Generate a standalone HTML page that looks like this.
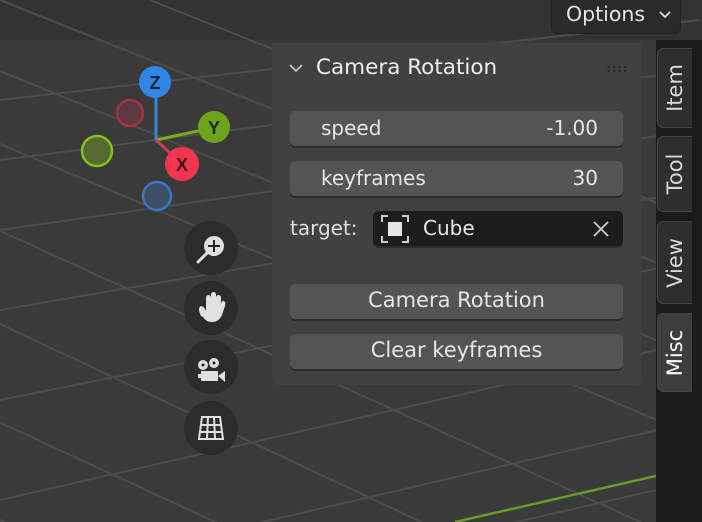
<html><head><style>
html,body{margin:0;width:702px;height:522px;overflow:hidden}
body{background:#3a3a3a;font-family:"Liberation Sans","DejaVu Sans",sans-serif;position:relative}
.a{position:absolute}
.f{position:absolute;background:#545454;border-radius:5px;color:#e6e6e6;font-size:20px;box-shadow:0 2px 0 #2c2c2c;font-family:"DejaVu Sans",sans-serif}
.tab{position:absolute;left:657px;width:34px;background:#2e2e2e;border:1px solid #444;border-right:none;border-radius:6px 0 0 6px;color:#d8d8d8;font-family:"DejaVu Sans",sans-serif;font-size:21px}
.tab span{position:absolute;left:50%;top:50%;transform:translate(-50%,-50%) rotate(-90deg);white-space:nowrap}
.btn{position:absolute;left:184px;width:54px;height:54px;border-radius:50%;background:#2b2b2b;opacity:.95}
</style></head><body>
<svg class="a" style="left:0;top:0" width="702" height="522">
<rect x="0" y="0" width="702" height="40" fill="#333"/>
<g stroke="#4c4c4c" stroke-width="2">
<line x1="-200" y1="60" x2="900" y2="522"/><line x1="-200" y1="140" x2="900" y2="640"/><line x1="-200" y1="230" x2="800" y2="700"/><line x1="-200" y1="330" x2="600" y2="700"/><line x1="-100" y1="30" x2="900" y2="440"/><line x1="0" y1="0" x2="900" y2="360"/><line x1="150" y1="0" x2="900" y2="300"/><line x1="-200" y1="430" x2="400" y2="700"/>
<line x1="0" y1="100" x2="700" y2="20"/><line x1="0" y1="160" x2="700" y2="70"/><line x1="0" y1="230" x2="700" y2="130"/><line x1="0" y1="310" x2="700" y2="190"/><line x1="0" y1="400" x2="700" y2="260"/><line x1="0" y1="500" x2="700" y2="340"/><line x1="100" y1="560" x2="700" y2="420"/><line x1="350" y1="560" x2="700" y2="480"/>
</g>
<line x1="455" y1="522" x2="660" y2="475" stroke="#6a9a2a" stroke-width="2.5"/>
<line x1="156" y1="83" x2="156" y2="140" stroke="#3a85d6" stroke-width="3"/>
<line x1="156" y1="140" x2="212" y2="128" stroke="#7aac1e" stroke-width="3"/>
<line x1="156" y1="140" x2="182" y2="164" stroke="#d63a55" stroke-width="3"/>
<circle cx="130" cy="113" r="13" fill="#5a3a40" stroke="#a0343f" stroke-width="2.5"/>
<circle cx="97" cy="151" r="15" fill="#556a30" stroke="#86c21a" stroke-width="2.5"/>
<circle cx="157" cy="196" r="14" fill="#3f4f68" stroke="#3a77c4" stroke-width="2.5"/>
<circle cx="155" cy="82" r="16" fill="#2f86e3"/><text x="155" y="89" font-size="18" font-weight="bold" text-anchor="middle" fill="#10213a" font-family="Liberation Sans">Z</text>
<circle cx="214" cy="127" r="16" fill="#6ea31c"/><text x="214" y="134" font-size="18" font-weight="bold" text-anchor="middle" fill="#1d2a08" font-family="Liberation Sans">Y</text>
<circle cx="182" cy="164" r="17" fill="#f2364f"/><text x="182" y="171" font-size="18" font-weight="bold" text-anchor="middle" fill="#4a0c16" font-family="Liberation Sans">X</text>
</svg>
<div class="btn" style="top:221px"></div><div class="btn" style="top:281px"></div><div class="btn" style="top:340px"></div><div class="btn" style="top:401px"></div>
<svg class="a" style="left:184px;top:221px" width="54" height="240">
<g fill="#e0e0e0" stroke="#e0e0e0">
<circle cx="30" cy="25" r="10" stroke="none"/><line x1="24" y1="31" x2="14" y2="41" stroke-width="3" stroke-linecap="round"/>
<path d="M30 19v12M24 25h12" stroke="#222" stroke-width="2"/>
<path transform="translate(0,16)" d="M17 79 q-4-8 0-10 q3 0 5 5 v-13 q0-3 2.5-3 q2.5 0 2.5 3 v-3 q0-3 2.5-3 q2.5 0 2.5 3 v3 q0-3 2.5-3 q2.5 0 2.5 3 v6 q1-4 3-3 q2 1 1 5 l-3 9 q-3 7 -10 7 q-6 0 -9-5z" stroke="none"/>
<circle cx="19" cy="144" r="5" stroke="none"/><circle cx="30" cy="142" r="5" stroke="none"/>
<circle cx="19" cy="144" r="1.5" fill="#222" stroke="none"/><circle cx="30" cy="142" r="1.5" fill="#222" stroke="none"/>
<rect x="17" y="150" width="17" height="10" stroke="none"/><rect x="14" y="153" width="4" height="4" stroke="none"/><path d="M34 155 l7-5v11z" stroke="none"/>
<path d="M18 196h18l3 22h-24z M16 204h22 M15 211h24 M24 196l-1 22 M30 196l1 22" fill="none" stroke-width="2"/>
</g></svg>
<div class="a" style="left:551px;top:-4px;width:128px;height:36px;background:#2a2a2a;border-radius:6px;border:1px solid #222"></div>
<div class="a" style="left:566px;top:2px;color:#e6e6e6;font-size:20.5px;font-family:'DejaVu Sans',sans-serif">Options</div>
<svg class="a" style="left:659px;top:11px" width="12" height="8"><path d="M1 1l5 5 5-5" stroke="#ddd" stroke-width="1.8" fill="none"/></svg>
<div class="a" style="left:656px;top:40px;width:46px;height:482px;background:#1b1b1b"></div>
<div class="tab" style="top:48px;height:78px"><span>Item</span></div>
<div class="tab" style="top:136px;height:74px"><span>Tool</span></div>
<div class="tab" style="top:221px;height:81px"><span>View</span></div>
<div class="tab" style="top:313px;height:77px;background:#3d3d3d;color:#fff"><span>Misc</span></div>
<div class="a" style="left:272px;top:43px;width:369px;height:342px;background:#414141;border-radius:0 0 6px 6px"></div>
<svg class="a" style="left:288px;top:62px" width="16" height="12"><path d="M2 3l6 6 6-6" stroke="#ccc" stroke-width="1.6" fill="none"/></svg>
<div class="a" style="left:316px;top:55px;color:#eee;font-size:21.5px;font-family:'DejaVu Sans',sans-serif">Camera Rotation</div>
<div class="a" style="left:606px;top:65px;width:22px;height:8px;background:radial-gradient(circle,#222 1px,transparent 1.2px) 0 0/5.5px 4px"></div>
<div class="f" style="left:290px;top:111px;width:333px;height:35px"><span class="a" style="left:31px;top:5px">speed</span><span class="a" style="right:25px;top:5px">-1.00</span></div>
<div class="f" style="left:290px;top:161px;width:333px;height:35px"><span class="a" style="left:31px;top:5px">keyframes</span><span class="a" style="right:25px;top:5px">30</span></div>
<div class="a" style="left:290px;top:216px;color:#ddd;font-size:20px;font-family:'DejaVu Sans',sans-serif">target:</div>
<div class="f" style="left:373px;top:211px;width:250px;height:35px;background:#1d1d1d"><span class="a" style="left:50px;top:5px">Cube</span></div>
<svg class="a" style="left:381px;top:215px" width="28" height="28"><path d="M1 7V1h6M21 1h6v6M27 21v6h-6M7 27H1v-6" stroke="#ccc" stroke-width="2" fill="none"/><rect x="7" y="7" width="14" height="14" fill="#e6e6e6"/></svg>
<svg class="a" style="left:593px;top:221px" width="16" height="16"><path d="M1 1l14 14M15 1L1 15" stroke="#ccc" stroke-width="1.8"/></svg>
<div class="f" style="left:290px;top:284px;width:333px;height:35px;text-align:center;line-height:33px;font-size:21px">Camera Rotation</div>
<div class="f" style="left:290px;top:334px;width:333px;height:35px;text-align:center;line-height:33px;font-size:21px">Clear keyframes</div>
</body></html>
